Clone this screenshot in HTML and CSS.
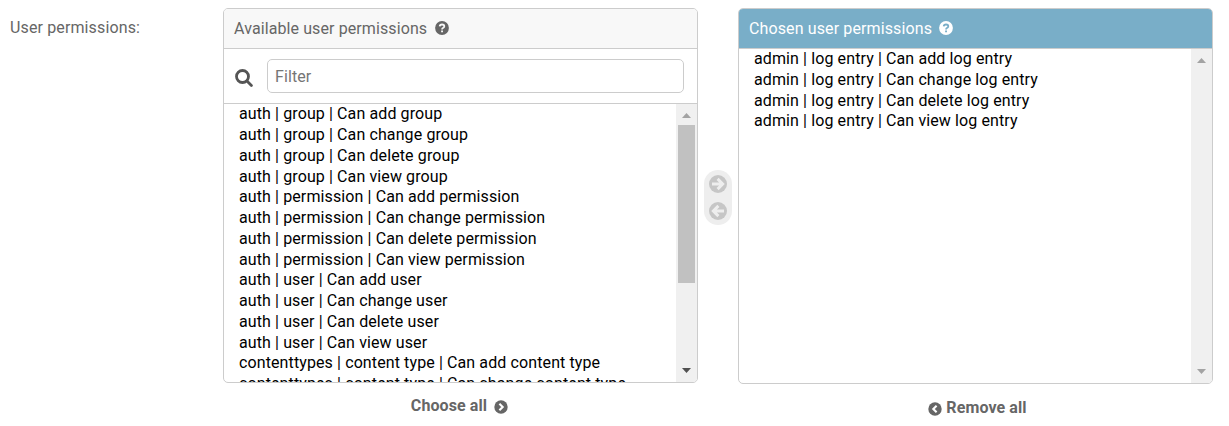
FILE: index.html
```html
<!DOCTYPE html>
<html lang="en">
<head>
<meta charset="utf-8">
<title>User permissions</title>
<link rel="stylesheet" href="styles.css">
</head>
<body>
<div class="row">
  <label class="field-label">User permissions:</label>
  <div class="column">
    <section class="panel available">
      <h2 class="head">Available user permissions
        <svg class="help" viewBox="0 0 14 14"><circle cx="7" cy="7" r="6.9" fill="#666"/><path d="M4.7 5.4Q4.9 3.5 7 3.5Q9.3 3.5 9.3 5.3Q9.3 6.4 8 7Q7.1 7.4 7.1 8.4" fill="none" stroke="#f8f8f8" stroke-width="1.8"/><path d="M6.1 9.4h1.9v1.8H6.1z" fill="#f8f8f8"/></svg>
      </h2>
      <div class="search">
        <svg class="glass" viewBox="0 0 18 18"><circle cx="7.5" cy="7.5" r="6" fill="none" stroke="#555" stroke-width="2.8"/><path d="M12 12l4.4 4.4" stroke="#555" stroke-width="2.8" stroke-linecap="round"/></svg>
        <input class="filter" type="text" placeholder="Filter">
      </div>
      <div class="body">
        <ul class="options">
          <li>auth | group | Can add group</li>
          <li>auth | group | Can change group</li>
          <li>auth | group | Can delete group</li>
          <li>auth | group | Can view group</li>
          <li>auth | permission | Can add permission</li>
          <li>auth | permission | Can change permission</li>
          <li>auth | permission | Can delete permission</li>
          <li>auth | permission | Can view permission</li>
          <li>auth | user | Can add user</li>
          <li>auth | user | Can change user</li>
          <li>auth | user | Can delete user</li>
          <li>auth | user | Can view user</li>
          <li>contenttypes | content type | Can add content type</li>
          <li>contenttypes | content type | Can change content type</li>
        </ul>
        <div class="scrollbar">
          <svg class="arrow" viewBox="0 0 9 5"><path d="M0 5L4.5 0L9 5z" fill="#a3a3a3"/></svg>
          <div class="thumb"></div>
          <svg class="arrow down" viewBox="0 0 9 5"><path d="M0 0L4.5 5L9 0z" fill="#505050"/></svg>
        </div>
      </div>
    </section>
    <a class="all choose">Choose all
      <svg class="round" viewBox="0 0 14 14"><circle cx="7" cy="7" r="6.7" fill="#666"/><path d="M5.4 3.7L8.7 7L5.4 10.3" fill="none" stroke="#fff" stroke-width="2.1"/></svg>
    </a>
  </div>
  <div class="chooser">
    <svg class="move" viewBox="0 0 18 18"><circle cx="9" cy="9" r="9" fill="#c6c6c6"/><path d="M3 9h10M8.6 3.9L13.7 9l-5.1 5.1" fill="none" stroke="#eee" stroke-width="2.9"/></svg>
    <svg class="move" viewBox="0 0 18 18"><circle cx="9" cy="9" r="9" fill="#c6c6c6"/><path d="M15 9h-10M9.4 3.9L4.3 9l5.1 5.1" fill="none" stroke="#eee" stroke-width="2.9"/></svg>
  </div>
  <div class="column">
    <section class="panel chosen">
      <h2 class="head">Chosen user permissions
        <svg class="help" viewBox="0 0 14 14"><circle cx="7" cy="7" r="6.9" fill="#fff"/><path d="M4.7 5.4Q4.9 3.5 7 3.5Q9.3 3.5 9.3 5.3Q9.3 6.4 8 7Q7.1 7.4 7.1 8.4" fill="none" stroke="#79aec8" stroke-width="1.8"/><path d="M6.1 9.4h1.9v1.8H6.1z" fill="#79aec8"/></svg>
      </h2>
      <div class="body">
        <ul class="options">
          <li>admin | log entry | Can add log entry</li>
          <li>admin | log entry | Can change log entry</li>
          <li>admin | log entry | Can delete log entry</li>
          <li>admin | log entry | Can view log entry</li>
        </ul>
        <div class="scrollbar">
          <svg class="arrow" viewBox="0 0 9 5"><path d="M0 5L4.5 0L9 5z" fill="#a3a3a3"/></svg>
          <svg class="arrow down" viewBox="0 0 9 5"><path d="M0 0L4.5 5L9 0z" fill="#a3a3a3"/></svg>
        </div>
      </div>
    </section>
    <a class="all remove">
      <svg class="round" viewBox="0 0 14 14"><circle cx="7" cy="7" r="6.7" fill="#666"/><path d="M8.6 3.7L5.3 7L8.6 10.3" fill="none" stroke="#fff" stroke-width="2.1"/></svg>
      Remove all</a>
  </div>
</div>
</body>
</html>
```
FILE: styles.css
```css
* { box-sizing: border-box; }
body {
  margin: 0;
  background: #fff;
  color: #666;
  font: 16px/20px Roboto, sans-serif;
  letter-spacing: 0.1px;
  overflow: hidden;
}
.row {
  display: flex;
  align-items: flex-start;
  padding: 8px 0 0 10px;
}
.field-label { width: 213px; padding-top: 10px; letter-spacing: 0.13px; }
.column { width: 475px; display: flex; flex-direction: column; align-items: center; }
.panel {
  width: 475px;
  border: 1px solid #ccc;
  border-radius: 5px;
  overflow: hidden;
  display: flex;
  flex-direction: column;
}
.available { height: 375px; }
.chosen { height: 376px; }
.head {
  display: flex;
  align-items: center;
  gap: 8px;
  flex: none;
  height: 40px;
  margin: 0;
  padding: 0 10px;
  border-bottom: 1px solid #ccc;
  background: #f8f8f8;
  font-size: 16px;
  font-weight: 400;
}
.chosen .head { background: #79aec8; color: #fff; gap: 7px; letter-spacing: 0.12px; }
.help { width: 14px; height: 14px; margin-bottom: 1px; }
.search {
  display: flex;
  align-items: center;
  flex: none;
  height: 55px;
  padding: 0 13px 0 11px;
  border-bottom: 1px solid #ccc;
}
.glass { width: 18px; height: 18px; margin: 3px 14px 0 0; }
.filter {
  flex: 1;
  height: 34px;
  padding: 0 7px;
  border: 1px solid #ccc;
  border-radius: 5px;
  font: 16px Roboto, sans-serif;
  letter-spacing: 0.1px;
}
.filter::placeholder { color: #757575; }
.body { display: flex; flex: 1; min-height: 0; }
.options {
  flex: 1;
  margin: 0;
  padding: 0 0 0 15px;
  list-style: none;
  color: #000;
  line-height: 20.75px;
  letter-spacing: 0.11px;
  white-space: nowrap;
  overflow: hidden;
}
.available .options { padding-top: 0.25px; }
.scrollbar {
  display: flex;
  flex-direction: column;
  align-items: center;
  width: 21px;
  padding: 9px 0;
  background: #f0f0f0;
}
.arrow { width: 9px; height: 5px; flex: none; }
.thumb { width: 17px; height: 158px; margin-top: 7px; background: #c1c1c1; }
.down { margin-top: auto; }
.chooser {
  display: flex;
  flex-direction: column;
  align-items: center;
  gap: 9px;
  width: 28px;
  height: 55px;
  margin: 162px 6px 0;
  padding-top: 5px;
  border-radius: 14px;
  background: #eee;
}
.move { width: 18px; height: 18px; }
.all { display: flex; align-items: center; font-weight: 700; }
.choose { gap: 7px; margin: 13px 2px 0 0; }
.remove { gap: 4px; margin: 14px 0 0 4px; }
.round { width: 14px; height: 14px; margin-top: 2px; }
```
